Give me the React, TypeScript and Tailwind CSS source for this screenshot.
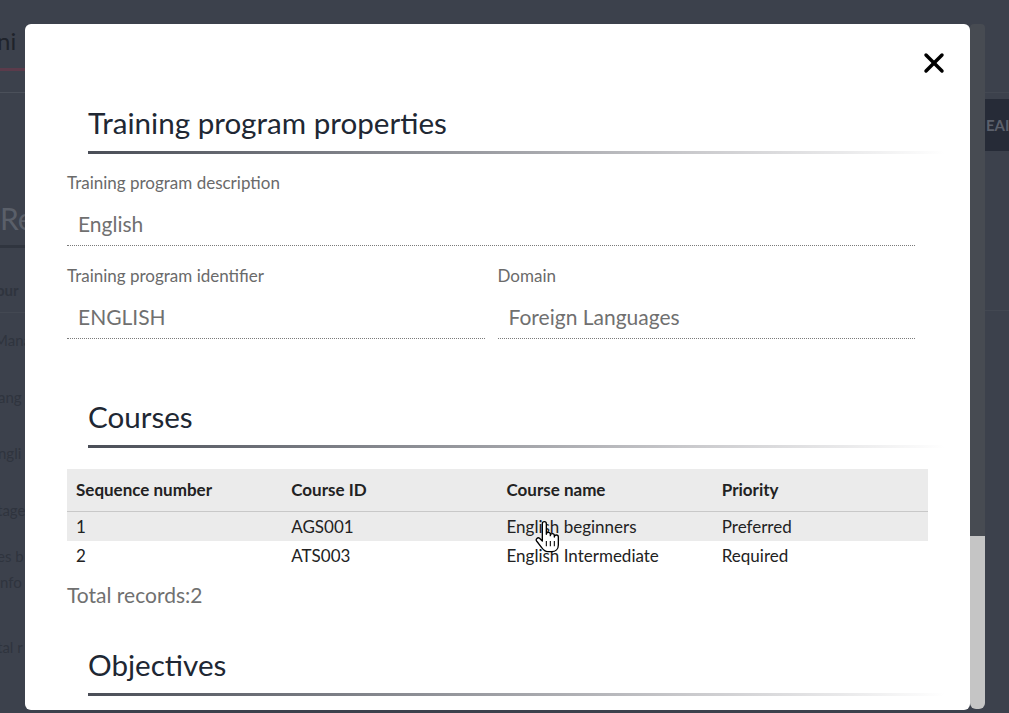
import { X } from "lucide-react"

type Course = { seq: string; id: string; name: string; priority: string }

const courses: Course[] = [
    { seq: "1", id: "AGS001", name: "English beginners", priority: "Preferred" },
    { seq: "2", id: "ATS003", name: "English Intermediate", priority: "Required" },
]

function BackgroundPage() {
    return (
        <div className="flex h-full justify-between">
            {/* left edge of the page behind the dialog */}
            <div className="flex w-[25px] flex-col overflow-hidden whitespace-nowrap text-[#2f343e]">
                <div className="mt-[26px] flex h-[30px] items-center -ml-[3px] text-[24px] text-[#1f232b]">ni</div>
                <div className="mt-[12px] h-[3px] bg-[#5b3b4b]" />
                <div className="mt-[21px] h-px bg-[#4b505a]" />
                <div className="mt-[107px] flex h-[36px] items-center text-[30px] text-[#5a5f69]">Re</div>
                <div className="mt-[9px] h-[3px] bg-[#30353f]" />
                <div className="mt-[28px] flex h-[28px] items-center -ml-[4px] text-[15px] font-bold">our</div>
                <div className="mt-[8px] h-px bg-[#434852]" />
                <div className="mt-[14px] flex h-[26px] items-center -ml-[6px] text-[15px]">Mana</div>
                <div className="mt-[31px] flex h-[26px] items-center -ml-[2px] text-[15px]">ang</div>
                <div className="mt-[30px] flex h-[26px] items-center -ml-[2px] text-[15px]">ngli</div>
                <div className="mt-[31px] flex h-[26px] items-center -ml-[3px] text-[15px]">tage</div>
                <div className="mt-[20px] flex h-[26px] items-center -ml-[3px] text-[15px]">es b</div>
                <div className="flex h-[26px] items-center text-[15px]">nfo</div>
                <div className="mt-[39px] flex h-[26px] items-center -ml-[3px] text-[15px]">tal r</div>
            </div>
            {/* right edge */}
            <div className="flex w-[24px] flex-col overflow-hidden whitespace-nowrap">
                <div className="mt-[92px] h-px bg-[#434852]" />
                <div className="mt-[6px] flex h-[52px] items-center bg-[#262b37] pl-[1px] text-[15px] font-bold text-[#5b606b]">
                    EAI
                </div>
                <div className="mt-[159px] h-px bg-[#434852]" />
            </div>
        </div>
    )
}

function SectionHeading({ title, className }: { title: string; className?: string }) {
    return (
        <div className={className}>
            <h2 className="ml-[21px] text-[29.6px] leading-[36px] text-[#202733]">{title}</h2>
            <div className="-mr-[17px] ml-[21px] mt-[10px] h-[3px] bg-linear-to-r from-[#4a4e57] via-[#c9c9cc] via-70% to-white" />
        </div>
    )
}

function Field({ label, value, className }: { label: string; value: string; className?: string }) {
    return (
        <div className={className}>
            <div className="text-[17px] leading-[20px] text-[#6a6a6a]">{label}</div>
            <div className="mt-[6px] flex h-[47px] items-center border-b border-dotted border-[#7a7a7a] pl-[11px] pt-[4px] text-[21px] text-[#707070]">
                {value}
            </div>
        </div>
    )
}

function HandCursor() {
    return (
        <svg
            className="pointer-events-none absolute left-[535px] top-[521px]"
            width="24"
            height="32"
            viewBox="0 0 18 24"
        >
            <path
                d="M5.5 2 a1.5 1.5 0 0 1 3 0 V10 a1.5 1.5 0 0 1 3 0 v1 a1.5 1.5 0 0 1 3 0 v1 a1.5 1.5 0 0 1 3 0 V18 c0 3 -2 5 -5 5 h-3 c-2 0 -3 -1 -4.5 -3 L1.2 15 a1.5 1.5 0 0 1 2.2 -2 L5.5 15 Z"
                fill="white"
                stroke="black"
                strokeWidth="1"
                strokeLinejoin="round"
            />
            <path d="M8.5 15 v4 M11.5 15 v4 M14.5 15 v4" stroke="black" strokeWidth="0.8" />
        </svg>
    )
}

function Modal() {
    return (
        <div className="flex h-[686px] w-[945px] flex-col overflow-hidden rounded-[6px] bg-white px-[42px]">
            <div className="-mr-[14px] flex justify-end pt-[31px]">
                <button className="flex h-[16px] w-[16px] items-center justify-center text-black">
                    <X size={32} strokeWidth={2.6} className="shrink-0" />
                </button>
            </div>

            <SectionHeading title="Training program properties" className="mt-[34px]" />

            <Field label="Training program description" value="English" className="mt-[19px] mr-[13px]" />

            <div className="mt-[20px] mr-[13px] grid grid-cols-2 gap-[13px]">
                <Field label="Training program identifier" value="ENGLISH" />
                <Field label="Domain" value="Foreign Languages" />
            </div>

            <SectionHeading title="Courses" className="mt-[60px]" />

            <table className="mt-[21px] w-full table-fixed border-collapse text-[17px] text-[#222]">
                <thead>
                    <tr className="h-[42px] border-b border-[#c8c8c8] bg-[#ebebeb] text-left">
                        <th className="pl-[9px] font-bold">Sequence number</th>
                        <th className="pl-[9px] font-bold">Course ID</th>
                        <th className="pl-[9px] font-bold">Course name</th>
                        <th className="pl-[9px] font-bold">Priority</th>
                    </tr>
                </thead>
                <tbody>
                    {courses.map((c, i) => (
                        <tr key={c.seq} className={i === 0 ? "h-[30px] bg-[#ebebeb]" : "h-[30px]"}>
                            <td className="pl-[9px]">{c.seq}</td>
                            <td className="pl-[9px]">{c.id}</td>
                            <td className="pl-[9px]">{c.name}</td>
                            <td className="pl-[9px]">{c.priority}</td>
                        </tr>
                    ))}
                </tbody>
            </table>

            <div className="mt-[12px] text-[21px] leading-[24px] text-[#707070]">Total records:2</div>

            <SectionHeading title="Objectives" className="mt-[40px]" />
        </div>
    )
}

export default function App() {
    return (
        <div className="relative h-[713px] w-[1009px] overflow-hidden bg-[#3c414c] font-['Lato',sans-serif]">
            <BackgroundPage />
            <div className="absolute inset-0 flex items-start pl-[25px] pt-[24px]">
                <Modal />
                <div className="flex h-[685px] w-[15px] flex-col">
                    <div className="flex-1 rounded-t-[4px] bg-[#474b52]" />
                    <div className="h-[173px] rounded-b-[6px] bg-[#c5c5c5]" />
                </div>
            </div>
            <HandCursor />
        </div>
    )
}
